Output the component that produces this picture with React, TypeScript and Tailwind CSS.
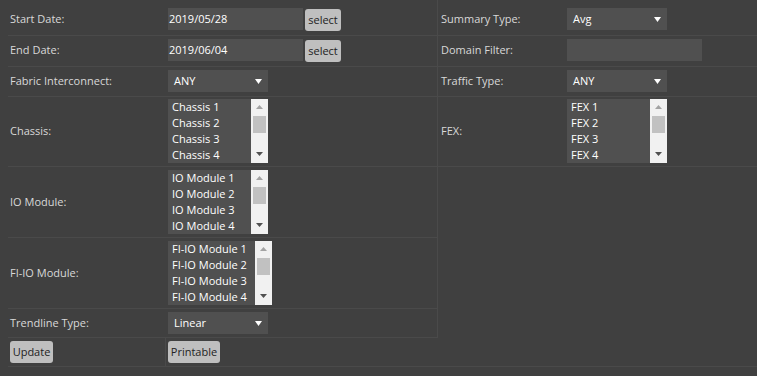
import React from "react";

const Arrow = () => (
  <svg width="7" height="5" viewBox="0 0 7 5" className="block">
    <path d="M0 0 L7 0 L3.5 5 Z" fill="#ffffff" />
  </svg>
);

const Dropdown = ({ value }: { value: string }) => (
  <div className="w-[100px] h-[22px] bg-[#505050] flex items-center justify-between pl-[6px] pr-[6px] text-white">
    <span>{value}</span>
    <Arrow />
  </div>
);

const TextBox = ({ value, w = 135 }: { value?: string; w?: number }) => (
  <div
    className={`h-[22px] bg-[#505050] flex items-center pl-[1px] text-white ${w === 135 ? "w-[135px]" : "w-[135px]"}`}
  >
    {value}
  </div>
);

const Btn = ({ label, w }: { label: string; w: string }) => (
  <div className={`h-[22px] ${w} bg-[#bfbfbf] rounded-[3px] flex items-center justify-center text-[#222222]`}>
    {label}
  </div>
);

const ListBox = ({ items, wide }: { items: string[]; wide?: boolean }) => (
  <div className={`h-[64px] bg-[#505050] flex ${wide ? "w-[104px]" : "w-[100px]"}`}>
    <div className="flex-1 flex flex-col pl-[4px] text-white overflow-hidden">
      {items.map((it) => (
        <div key={it} className="h-[16px] leading-[16px] whitespace-nowrap">
          {it}
        </div>
      ))}
    </div>
    <div className="w-[17px] h-[64px] bg-[#f1f1f1] flex flex-col items-center">
      <svg width="7" height="4" viewBox="0 0 7 4" className="block mt-[6px]">
        <path d="M0 4 L7 4 L3.5 0 Z" fill="#a3a3a3" />
      </svg>
      <div className="w-[13px] h-[17px] bg-[#c1c1c1] mt-[7px]" />
      <svg width="7" height="4" viewBox="0 0 7 4" className="block mt-[19px]">
        <path d="M0 0 L7 0 L3.5 4 Z" fill="#505050" />
      </svg>
    </div>
  </div>
);

const Row = ({
  h,
  pt,
  ch,
  label,
  children,
  right,
}: {
  h: string;
  pt: string;
  ch: string;
  label: string;
  children: React.ReactNode;
  right?: boolean;
}) => (
  <div className={`flex items-start border-b border-[#4a4a4a] ${h} ${pt}`}>
    <div className={`${right ? "w-[126px] pl-[3px]" : "w-[157px] pl-[2px]"} ${ch} flex items-center text-[#d8d8d8]`}>
      {label}
    </div>
    <div className={`pl-[3px] ${ch} flex items-start`}>{children}</div>
  </div>
);

export default function App() {
  return (
    <div className="w-full h-[376px] bg-[#404040] font-['Open_Sans',sans-serif] text-[11px] overflow-hidden">
      <div className="flex">
        <div className="ml-[8px] w-[430px] border-r border-[#4a4a4a] flex flex-col">
          <Row h="h-[36px]" pt="pt-[8px]" ch="h-[22px]" label="Start Date:">
            <TextBox value="2019/05/28" />
            <div className="ml-[2px] mt-[1px]">
              <Btn label="select" w="w-[36px]" />
            </div>
          </Row>
          <Row h="h-[31px]" pt="pt-[3px]" ch="h-[22px]" label="End Date:">
            <TextBox value="2019/06/04" />
            <div className="ml-[2px] mt-[1px]">
              <Btn label="select" w="w-[36px]" />
            </div>
          </Row>
          <Row h="h-[30px]" pt="pt-[3px]" ch="h-[22px]" label="Fabric Interconnect:">
            <Dropdown value="ANY" />
          </Row>
          <Row h="h-[70px]" pt="pt-[2px]" ch="h-[64px]" label="Chassis:">
            <ListBox items={["Chassis 1", "Chassis 2", "Chassis 3", "Chassis 4"]} />
          </Row>
          <Row h="h-[71px]" pt="pt-[3px]" ch="h-[64px]" label="IO Module:">
            <ListBox items={["IO Module 1", "IO Module 2", "IO Module 3", "IO Module 4"]} />
          </Row>
          <Row h="h-[71px]" pt="pt-[3px]" ch="h-[64px]" label="FI-IO Module:">
            <ListBox
              wide
              items={["FI-IO Module 1", "FI-IO Module 2", "FI-IO Module 3", "FI-IO Module 4"]}
            />
          </Row>
          <Row h="h-[29px]" pt="pt-[3px]" ch="h-[22px]" label="Trendline Type:">
            <Dropdown value="Linear" />
          </Row>
        </div>
        <div className="flex-1 flex flex-col">
          <Row right h="h-[36px]" pt="pt-[8px]" ch="h-[22px]" label="Summary Type:">
            <Dropdown value="Avg" />
          </Row>
          <Row right h="h-[31px]" pt="pt-[3px]" ch="h-[22px]" label="Domain Filter:">
            <TextBox />
          </Row>
          <Row right h="h-[30px]" pt="pt-[3px]" ch="h-[22px]" label="Traffic Type:">
            <Dropdown value="ANY" />
          </Row>
          <Row right h="h-[70px]" pt="pt-[2px]" ch="h-[64px]" label="FEX:">
            <ListBox items={["FEX 1", "FEX 2", "FEX 3", "FEX 4"]} />
          </Row>
        </div>
      </div>
      <div className="ml-[8px] flex h-[29px] border-b border-[#4a4a4a]">
        <div className="w-[158px] border-r border-[#4a4a4a] pl-[2px] pt-[3px]">
          <Btn label="Update" w="w-[43px]" />
        </div>
        <div className="pl-[2px] pt-[3px]">
          <Btn label="Printable" w="w-[52px]" />
        </div>
      </div>
    </div>
  );
}
